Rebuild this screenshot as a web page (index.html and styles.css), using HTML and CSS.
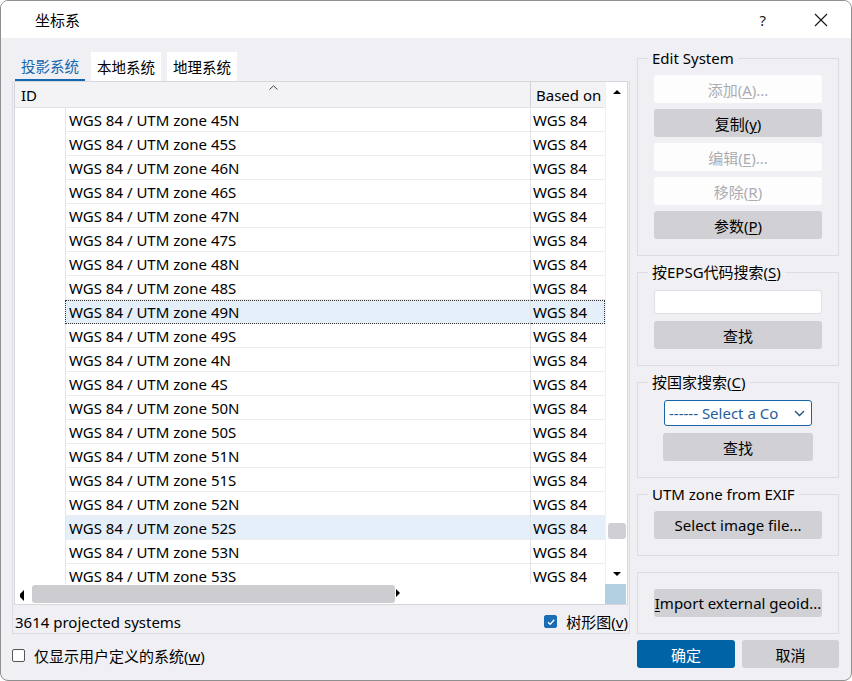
FILE: index.html
```html
<!DOCTYPE html>
<html>
<head>
<meta charset="utf-8">
<link rel="stylesheet" href="styles.css">
</head>
<body>
<div class="window">
  <div class="titlebar">
    <div class="title">坐标系</div>
    <div class="help">?</div>
    <div class="close"><svg width="14" height="14" viewBox="0 0 14 14"><path d="M1 1L13 13M13 1L1 13" stroke="#1a1a1a" stroke-width="1.2" fill="none"/></svg></div>
  </div>
  <div class="main">
    <div class="left">
      <div class="tabs">
        <div class="tab active">投影系统</div>
        <div class="tab">本地系统</div>
        <div class="tab">地理系统</div>
      </div>
      <div class="pane">
        <div class="table">
          <div class="viewport">
            <div class="thead">
              <div class="th th-id">ID<span class="sort"><svg width="9" height="5" viewBox="0 0 9 5"><path d="M0.5 4.5L4.5 0.8L8.5 4.5" stroke="#444" stroke-width="1" fill="none"/></svg></span></div>
              <div class="th th-based">Based on</div>
            </div>
            <div class="tbody" id="tbody"></div>
          </div>
          <div class="vscroll">
            <div class="arrow up"></div>
            <div class="vthumb"></div>
            <div class="arrow down"></div>
          </div>
          <div class="hscroll">
            <div class="arrow left"></div>
            <div class="hthumb"></div>
            <div class="arrow right"></div>
          </div>
          <div class="corner"></div>
        </div>
        <div class="status">
          <span>3614 projected systems</span>
          <label class="check"><span class="box checked"><svg width="10" height="10" viewBox="0 0 10 10"><path d="M2 5.2L4.2 7.3L8.2 2.8" stroke="#fff" stroke-width="1.3" fill="none"/></svg></span><span>树形图(<u>v</u>)</span></label>
        </div>
      </div>
      <div class="bottom-left">
        <label class="check"><span class="box"></span><span>仅显示用户定义的系统(<u>w</u>)</span></label>
      </div>
    </div>
    <div class="right">
      <fieldset class="group g1">
        <legend>Edit System</legend>
        <div class="btn disabled"><span>添加(<u>A</u>)...</span></div>
        <div class="btn"><span>复制(<u>y</u>)</span></div>
        <div class="btn disabled"><span>编辑(<u>E</u>)...</span></div>
        <div class="btn disabled"><span>移除(<u>R</u>)</span></div>
        <div class="btn"><span>参数(<u>P</u>)</span></div>
      </fieldset>
      <fieldset class="group g2">
        <legend>按EPSG代码搜索(<u>S</u>)</legend>
        <div class="input"></div>
        <div class="btn">查找</div>
      </fieldset>
      <fieldset class="group g3">
        <legend>按国家搜索(<u>C</u>)</legend>
        <div class="select"><span class="seltext">------ Select a Cou</span><svg width="11" height="7" viewBox="0 0 11 7"><path d="M1 1L5.5 5.5L10 1" stroke="#1f4f80" stroke-width="1.3" fill="none"/></svg></div>
        <div class="btn narrow">查找</div>
      </fieldset>
      <fieldset class="group g4">
        <legend>UTM zone from EXIF</legend>
        <div class="btn">Select image file...</div>
      </fieldset>
      <fieldset class="group g5">
        <div class="btn"><span><u>I</u>mport external geoid...</span></div>
      </fieldset>
      <div class="actions">
        <div class="btn primary">确定</div>
        <div class="btn cancel">取消</div>
      </div>
    </div>
  </div>
</div>
<script>
const rows = ["45N","45S","46N","46S","47N","47S","48N","48S","49N","49S","4N","4S","50N","50S","51N","51S","52N","52S","53N","53S"];
const tb = document.getElementById('tbody');
rows.forEach(z => {
  const r = document.createElement('div');
  r.className = 'row' + (z === '49N' ? ' sel' : '') + (z === '52S' ? ' hl' : '');
  r.innerHTML = '<div class="indent"></div><div class="td name">WGS 84 / UTM zone ' + z + '</div><div class="td based">WGS 84</div>';
  tb.appendChild(r);
});
</script>
</body>
</html>
```
FILE: styles.css
```css
* { box-sizing: border-box; }
html, body { margin: 0; padding: 0; }
body {
  width: 852px; height: 681px; overflow: hidden;
  font-family: "Noto Sans", "Noto Sans CJK SC", sans-serif;
  font-size: 15px; color: #000;
  background: #fff;
}
u { text-decoration: underline; text-underline-offset: 2px; }
.window {
  width: 852px; height: 681px;
  background: #f0f0f4;
  border: 1px solid #8f8f8f;
  border-radius: 8px;
  overflow: hidden;
}
.titlebar {
  height: 37px; background: #fff;
  display: flex; align-items: center;
  position: relative;
}
.title { margin-left: 34px; font-size: 15px; }
.help { margin-left: auto; margin-right: 48px; font-size: 15px; color: #1a1a1a; }
.close { margin-right: 23px; display: flex; }
.main {
  display: flex; gap: 7px;
  padding: 11px 12px 0 11px;
}
.left { width: 618px; padding-top: 3px; }
.tabs { display: flex; gap: 6px; padding-left: 3px; height: 29px; }
.tab {
  width: 70px; height: 29px; background: #fff;
  display: flex; align-items: center; justify-content: center;
  font-size: 14.5px;
}
.tab.active { background: transparent; color: #1567b0; border-bottom: 2px solid #1567b0; }
.pane {
  border: 1px solid #dcdce2; border-top: none;
  padding: 0 1px;
}
.table {
  border: 1px solid #d6d6dc;
  height: 524px;
  display: grid;
  grid-template-columns: 590px 21px;
  grid-template-rows: 502px 20px;
  background: #fff;
}
.viewport { overflow: hidden; }
.thead {
  height: 26px; display: flex;
  background: #f3f3f6;
  border-bottom: 1px solid #e2e2e6;
}
.th { display: flex; align-items: center; padding-top: 1px; }
.th-id { width: 516px; padding-left: 6px; position: relative; border-right: 1px solid #d0d0d6; }
.sort { position: absolute; left: 254px; top: 3px; display: flex; }
.th-based { padding-left: 5px; }
.row { display: flex; height: 24px; }
.indent { width: 50px; flex: none; background: #fff; }
.td {
  height: 24px; border-bottom: 1px solid #ebebef;
  display: flex; align-items: center; white-space: nowrap; overflow: hidden;
}
.name { width: 466px; flex: none; border-left: 1px solid #e4e4e8; border-right: 1px solid #e4e4e8; padding-left: 3px; }
.based { flex: 1; padding-left: 2px; }
.row.sel .td, .row.hl .td { background: #e5eff9; }
.row.sel .name { border: 1px dotted #333; border-right: 1px solid #e4e4e8; }
.row.sel .based { border-top: 1px dotted #333; border-bottom: 1px dotted #333; border-right: 1px dotted #333; }
.vscroll {
  background: #fff; position: relative;
  border-left: 1px solid #f0f0f0;
}
.arrow { position: absolute; width: 0; height: 0; }
.arrow.up { top: 8px; left: 7px; border-left: 4px solid transparent; border-right: 4px solid transparent; border-bottom: 4px solid #000; }
.arrow.down { bottom: 8px; left: 7px; border-left: 4px solid transparent; border-right: 4px solid transparent; border-top: 4px solid #000; }
.vthumb { position: absolute; left: 2px; top: 441px; width: 18px; height: 16px; background: #cfcfd4; border-radius: 3px; }
.hscroll { background: #fff; position: relative; }
.arrow.left { left: 5px; top: 6px; border-top: 4px solid transparent; border-bottom: 4px solid transparent; border-right: 4px solid #000; }
.arrow.right { right: 7px; top: 6px; border-top: 4px solid transparent; border-bottom: 4px solid transparent; border-left: 4px solid #000; }
.hthumb { position: absolute; left: 17px; top: 1px; width: 363px; height: 18px; background: #cdcdd1; border-radius: 3px; }
.corner { background: #b3cfe2; }
.status {
  height: 28px; display: flex; align-items: center; justify-content: space-between;
  padding-left: 1px; padding-top: 5px;
}
.check { display: flex; align-items: center; gap: 9px; }
.box {
  width: 13px; height: 13px; border: 1px solid #555; border-radius: 2px; background: #fff;
  display: flex; align-items: center; justify-content: center; flex: none;
}
.box.checked { background: #1a6db5; border-color: #1a6db5; }
.bottom-left { height: 38px; display: flex; align-items: center; padding-top: 5px; }
.right { width: 202px; margin-top: -1px; }
.group {
  margin: 0; border: 1px solid #dcdce2;
  padding: 7px 16px 16px 16px;
  display: flex; flex-direction: column; gap: 6px;
  min-width: 0;
}
.group legend {
  padding: 0 4px; margin-left: -6px; line-height: 20px; font-size: 15px;
}
.g1 { margin-top: 0; }
.g2 { margin-top: 6px; padding-top: 8px; gap: 7px; }
.g3 { margin-top: 6px; padding-top: 8px; gap: 7px; }
.g4 { margin-top: 6px; padding-top: 7px; }
.g5 { margin-top: 16px; padding-top: 16px; }
.btn {
  height: 28px; background: #d0d0d5; border-radius: 3px;
  display: flex; align-items: center; justify-content: center;
  white-space: nowrap; flex: none;
}
.btn.disabled { background: #fdfdfe; color: #acacb0; }
.btn.narrow { width: 150px; align-self: center; }
.input { height: 24px; background: #fff; border: 1px solid #e0e0e4; border-radius: 3px; flex: none; }
.select {
  width: 148px; height: 26px; align-self: center; flex: none;
  border: 1px solid #1565a8; border-radius: 3px; background: #fff;
  display: flex; align-items: center; padding: 0 6px 0 4px;
  color: #1f5e99;
}
.seltext { width: 110px; overflow: hidden; white-space: nowrap; }
.select svg { margin-left: auto; }
.actions { display: flex; gap: 7px; margin-top: 6px; }
.btn.primary { width: 98px; background: #0063a6; color: #fff; }
.btn.cancel { width: 97px; }
```
